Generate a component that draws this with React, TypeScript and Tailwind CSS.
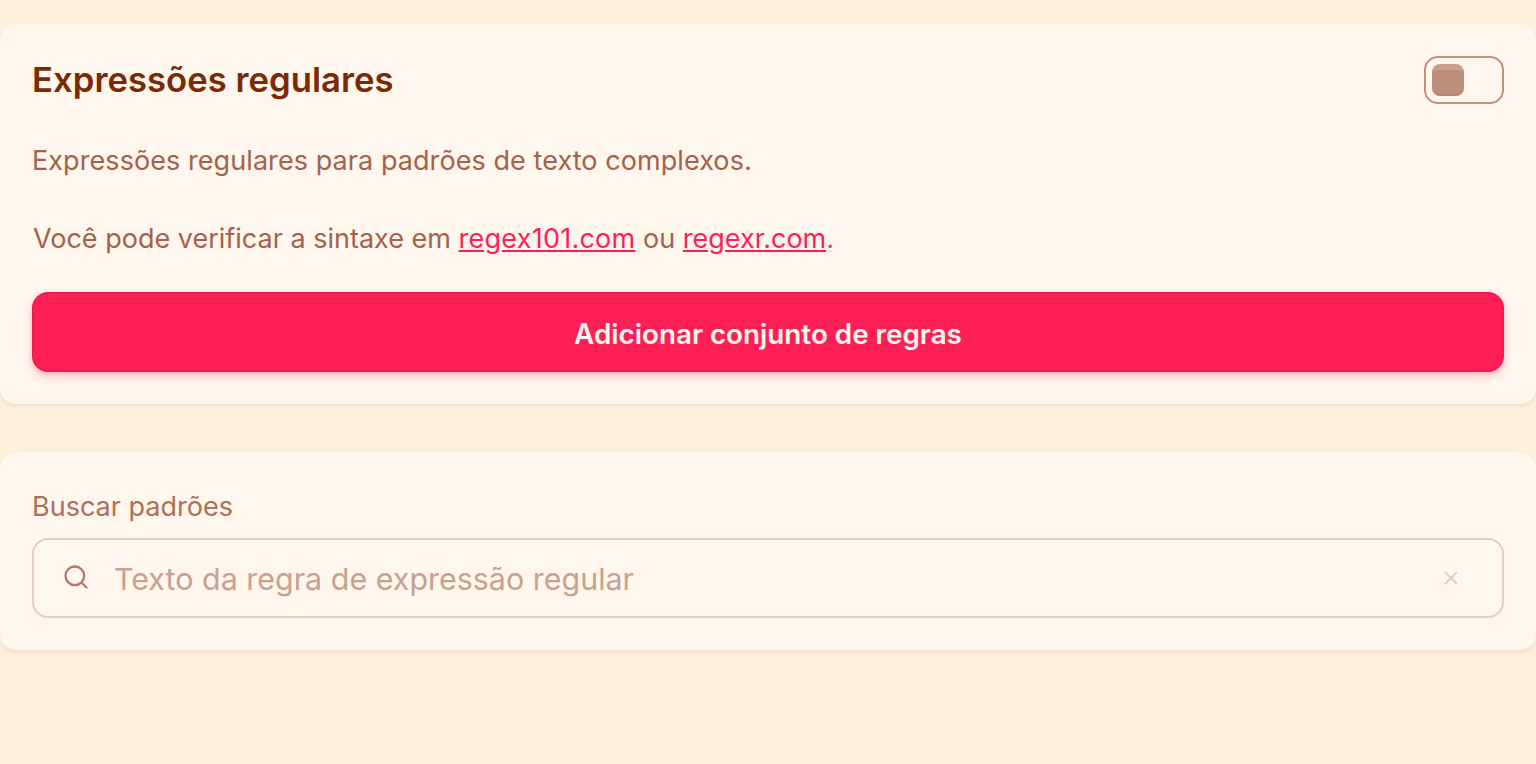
export default function App() {
  return (
    <div className="min-h-[764px] bg-[#fff0dd] pt-6 font-['Inter',sans-serif]">
      <section className="rounded-2xl bg-[#fff6ed] p-8 shadow-[0_2px_4px_rgba(120,50,0,0.1)]">
        <div className="flex h-12 items-center justify-between">
          <h2 className="-mt-[2px] text-[34.7px] leading-[48px] font-semibold text-[#7a2a05]">Expressões regulares</h2>
          <div className="flex h-12 w-20 items-center rounded-[14px] border-2 border-[#c29380] px-[6px]">
            <div className="h-8 w-8 rounded-lg border-t-[6px] border-b-2 border-t-[#c9a08d] border-b-[#b38571] bg-[#bd8f7a]"></div>
          </div>
        </div>
        <p className="mt-[37px] text-[27px] leading-[39px] tracking-[0.07px] text-[#a5624a]">Expressões regulares para padrões de texto complexos.</p>
        <p className="mt-[39px] pl-px text-[27px] leading-[39px] text-[#a5624a]">
          Você pode verificar a sintaxe em <a className="tracking-[0.25px] text-[#ff1f57] underline">regex101.com</a> ou <a className="text-[#ff1f57] underline">regexr.com</a>.
        </p>
        <button className="mt-[34px] block h-20 w-full rounded-2xl border-2 border-[#f01a50] bg-[#ff1f57] pt-[5px] text-[27.8px] font-semibold text-[#fff6ed] shadow-[0_4px_8px_rgba(255,31,87,0.3)]">Adicionar conjunto de regras</button>
      </section>
      <section className="mt-12 rounded-2xl bg-[#fff6ed] p-8 shadow-[0_2px_4px_rgba(120,50,0,0.1)]">
        <div className="pt-[5px] text-[27px] leading-[36px] text-[#ad7059]">Buscar padrões</div>
        <div className="mt-[13px] flex h-20 items-center rounded-2xl border-2 border-[#e7cdbd] pr-[10px] pl-[28px]">
          <svg width="28" height="28" viewBox="0 0 24 24" fill="none" stroke="#b27a64" strokeWidth="2" strokeLinecap="round" className="-mt-[2px]"><circle cx="11" cy="11" r="8"/><path d="m21 21-4.3-4.3"/></svg>
          <span className="ml-[24px] flex-1 pt-[4px] text-[30.45px] text-[#c9a18e]">Texto da regra de expressão regular</span>
          <svg width="16" height="16" viewBox="0 0 16 16" stroke="#e7cdbd" strokeWidth="1.8" className="mr-[33px]"><path d="M2 2l12 12M14 2 2 14"/></svg>
        </div>
      </section>
    </div>
  );
}
